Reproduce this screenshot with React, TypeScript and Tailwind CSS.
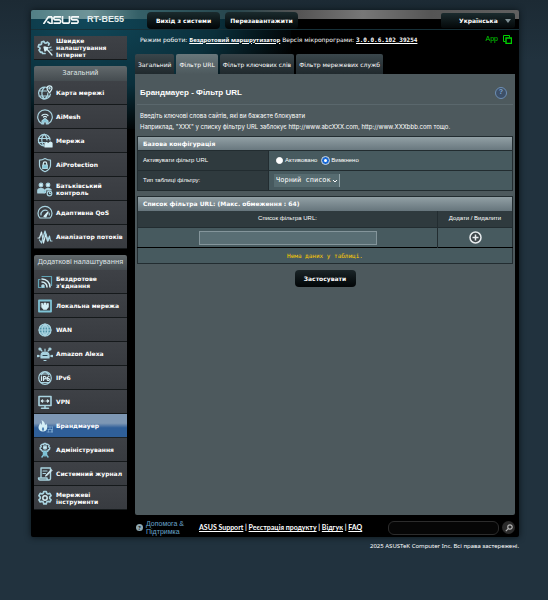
import React from 'react'

type MenuItem = { label: string; icon: React.ReactNode; active?: boolean }

const Icon = ({ children }: { children: React.ReactNode }) => (
  <svg viewBox="0 0 16 16" className="h-4 w-4 shrink-0" fill="none" stroke="#a9d3e0" strokeWidth="1.2" strokeLinecap="round" strokeLinejoin="round" aria-hidden="true">
    {children}
  </svg>
)

const gearPath = 'M6.8 1.5h2.4l.5 1.800 1.300.700 1.800-.600 1.300 2.200-1.400 1.300v1.600l1.400 1.300-1.300 2.200-1.800-.600-1.300.700-.500 1.800H6.800l-.500-1.800-1.300-.700-1.800.600-1.300-2.200 1.400-1.300V7.100L1.900 5.600l1.300-2.200 1.800.600 1.300-.700z'

const quickIcon = (
  <Icon>
    <path d="M8 13.5H5.5L5 12l-1.5.3L2 10l1-1.2-.3-1.3L1.2 7 2 4.5l1.7.2.9-.9L4.5 2l2.4-.6.8 1.5 1.4.2 1.3-1 1.8 1.5-.7 1.5" strokeWidth="1.7" />
    <path d="M8 7l7 8M7 7l4 .5L8 11z" fill="#d4eef5" stroke="#d4eef5" />
    <path d="M12 8l2-1M13 10h2" />
  </Icon>
)

const generalItems: MenuItem[] = [
  {
    label: 'Карта мережі',
    icon: (
      <Icon>
        <path d="M10.5 2.8A6 6 0 1 0 13.5 9M2 6h7.5M2 11h11M7.5 2.5C4 5 4 11.500 7.500 14M7.500 14c2.500-1.500 3.500-4 3.300-6" />
        <path d="M12.500 7.800C11 5.800 10 4.800 10 3.300a2.500 2.500 0 0 1 5 0c0 1.500-1 2.500-2.500 4.500z" stroke="#d4eef5" />
        <circle cx="12.500" cy="3.300" r=".6" fill="#d4eef5" />
      </Icon>
    ),
  },
  {
    label: 'AiMesh',
    icon: (
      <Icon>
        <path d="M4.500 14.500a7.300 7.300 0 1 1 7 0" />
        <path d="M5 6.500a4.200 4.200 0 0 1 6 0M6.500 8a2.200 2.200 0 0 1 3 0" stroke="#d4eef5" />
        <path d="M5 15v-3l3-2.500 3 2.500v3H9.300v-2H6.700v2z" fill="#7fc3d6" />
      </Icon>
    ),
  },
  {
    label: 'Мережа',
    icon: (
      <Icon>
        <path d="M13 7A5.800 5.800 0 1 0 7 13M1.500 5.500h11M1.500 9.500H8M7 1.500C4 4 4 10 7 13M7.500 1.500C9.500 3.500 10 5 10 7" />
        <path d="M8 14v-3.500l1.500-1 1.500 1V14zM12 14v-4l1.500-1 1.500 1v4z" fill="#d4eef5" stroke="#d4eef5" />
      </Icon>
    ),
  },
  {
    label: 'AiProtection',
    icon: (
      <Icon>
        <path d="M8 1.500c2 1.300 3.500 1.700 5.500 1.700v5c0 3.300-2.500 5.300-5.500 6.500-3-1.200-5.500-3.200-5.500-6.500v-5C4.500 3.200 6 2.800 8 1.500z" />
        <path d="M6.300 8V6.500a1.700 1.700 0 0 1 3.400 0V8" stroke="#d4eef5" />
        <path d="M5.700 8h4.600v3.500H5.700z" fill="#7fc3d6" />
      </Icon>
    ),
  },
  {
    label: 'Батьківський контроль',
    icon: (
      <Icon>
        <circle cx="4" cy="4" r="1.800" fill="#d4eef5" />
        <circle cx="11" cy="4" r="1.800" fill="#d4eef5" />
        <path d="M.8 12V9.500C.8 8 2 7.500 4 7.500s3 .5 3 2V12zM8.500 9c0-1 1-1.500 2.500-1.500 2 0 3 .7 3.300 1.500z" fill="#a9d3e0" />
        <circle cx="7.500" cy="10.500" r="1.300" fill="#7fc3d6" />
        <circle cx="12.500" cy="12.500" r="2.300" />
        <path d="M12.500 11.500v1h1" />
      </Icon>
    ),
  },
  {
    label: 'Адаптивна QoS',
    icon: (
      <Icon>
        <path d="M3 13A7 6.800 0 1 1 13 13z" />
        <path d="M4 10a4.300 4.300 0 0 1 6-4.500M12 8a4.300 4.300 0 0 1 .3 2" />
        <path d="M7 11.500l4-4.500-2.200 5z" fill="#d4eef5" stroke="#d4eef5" />
      </Icon>
    ),
  },
  {
    label: 'Аналізатор потоків',
    icon: (
      <Icon>
        <path d="M1 9h1.500L4.500 3l2 11 2.300-9 1.700 7 1.500-3" stroke="#d4eef5" />
        <path d="M2.500 11l2 3L8 2l3 10 1.500-5 1 5M14.500 12h.5" />
      </Icon>
    ),
  },
]

const advancedItems: MenuItem[] = [
  {
    label: "Бездротове з'єднання",
    icon: (
      <Icon>
        <path d="M3 5.500H1.500v8h6M5 2.500h9.500v9" stroke="#5fa3b5" />
        <path d="M5 5a8 8 0 0 1 8 8M5 8a5 5 0 0 1 5 5" stroke="#d4eef5" strokeWidth="1.500" />
        <circle cx="6" cy="12" r="1.200" fill="#d4eef5" />
      </Icon>
    ),
  },
  {
    label: 'Локальна мережа',
    icon: (
      <Icon>
        <path d="M2 2.500h12v11H2z" stroke="#7fc3d6" strokeWidth="1.800" />
        <path d="M4.500 5.500h1.500v1.500h1V5h2v2h1V5.500h1.500V9L9.500 11.500h-3L4.500 9z" fill="#d4eef5" stroke="#d4eef5" strokeWidth=".6" />
      </Icon>
    ),
  },
  {
    label: 'WAN',
    icon: (
      <Icon>
        <circle cx="8" cy="8" r="6" fill="#4f91a6" />
        <path d="M2 8h12M3 5h10M3 11h10M8 2v12M8 2C4 5 4 11 8 14c4-3 4-9 0-12z" />
      </Icon>
    ),
  },
  {
    label: 'Amazon Alexa',
    icon: (
      <Icon>
        <path d="M4 9.500C4 5 12 5 12 9.500V12H4z" fill="#a9d3e0" />
        <path d="M6 9.500h4" stroke="#2c4550" />
        <path d="M5 5L3.500 3.500M11 5l1.500-1.500M3 10H1.500M13 10h1.500M8 5V3" />
        <circle cx="3" cy="3" r="1" fill="#7fc3d6" />
        <circle cx="13" cy="3" r="1" fill="#7fc3d6" />
        <circle cx="1" cy="10" r=".7" fill="#7fc3d6" />
        <circle cx="15" cy="10" r=".7" fill="#7fc3d6" />
        <path d="M7 14.500h2" />
      </Icon>
    ),
  },
  {
    label: 'IPv6',
    icon: (
      <Icon>
        <circle cx="8" cy="8" r="6.300" />
        <path d="M3.500 4h9M3.500 12.500h9M8 1.700C5 3 4.500 4.500 4.500 5M8 1.700c3 1.300 3.500 2.800 3.500 3.300" />
        <path d="M4.500 6.500v4M6.500 10.500v-4h1.300a1 1 0 0 1 0 2.300H6.500M12 6.500c-2.500 0-2.500 4-.8 4s1.700-2.500-.8-2" stroke="#d4eef5" />
      </Icon>
    ),
  },
  {
    label: 'VPN',
    icon: (
      <Icon>
        <path d="M2 2.500h12v9H2zM8 11.500V14M4.500 14.300h7" strokeWidth="1.600" />
        <path d="M4.500 7h2.500M9 7h2.500M5.500 5.800L4.300 7l1.200 1.200M10.500 5.800L11.700 7l-1.200 1.200" stroke="#d4eef5" />
      </Icon>
    ),
  },
  {
    label: 'Брандмауер',
    active: true,
    icon: (
      <Icon>
        <path d="M6 13.500c-3 0-4.500-2-4.500-4 0-2 1.500-3 1.500-4.500 1 .5 1.300 1 1.500 2C5.500 5.500 5 3.500 4.500 2 7.500 3.500 8 5.500 8 7c.8-.3 1-1 1-1.500 1.300 1.500 1.500 3 1.300 4-.3 2.500-1.800 4-4.300 4z" fill="#d4eef5" stroke="none" />
        <path d="M6 13c-1.500-1-1.500-2.500 0-4 1.500 1.500 1.500 3 0 4z" fill="#4f84b5" stroke="none" />
        <path d="M11 9h4.500M11 11.500h4.500M10 14h5.500M13 9v2.500M11.500 11.500V14M14.500 11.500V14M15.500 9v5" stroke="#86b4d6" strokeWidth=".6" />
      </Icon>
    ),
  },
  {
    label: 'Адміністрування',
    icon: (
      <Icon>
        <path d="M7 1.500h2l.4 1.200 1.300-.5 1.500 1.400-.6 1.200 1.200.7-.3 2-1.200.3-.5 1.400-5.600 0-.7-1.400-1.200-.3-.2-2 1.200-.7-.6-1.200 1.500-1.400 1.300.5z" strokeWidth="1.400" />
        <circle cx="8" cy="5.500" r="1.600" fill="#d4eef5" />
        <path d="M6.500 9.500V13l-1.500 2M9.500 9.500V13l1.500 2M8 10v4" stroke="#7fc3d6" strokeWidth="1.500" />
      </Icon>
    ),
  },
  {
    label: 'Системний журнал',
    icon: (
      <Icon>
        <path d="M4 11V2h9.500v10.500c0 1-.5 1.500-1.500 1.500H3c-1 0-1.500-.7-1.500-2h8.500c0 1.300.5 2 1.500 2" strokeWidth="1.400" />
        <path d="M6 5h4M6 7.500h2.500" />
        <path d="M15 4.500L9.500 10l-1 .3.300-1.200L14 3.800z" fill="#d4eef5" stroke="#d4eef5" strokeWidth=".8" />
      </Icon>
    ),
  },
  {
    label: 'Мережеві інструменти',
    icon: (
      <Icon>
        <path d={gearPath} strokeWidth="1.700" />
        <circle cx="8" cy="8" r="2.200" stroke="#d4eef5" strokeWidth="1.500" />
      </Icon>
    ),
  },
]

const tabs = ['Загальний', 'Фільтр URL', 'Фільтр ключових слів', 'Фільтр мережевих служб']

const MenuLink = ({ item }: { item: MenuItem }) => (
  <li>
    <a
      href="#"
      className={
        item.active
          ? 'flex h-6 items-center gap-[3px] border-b border-[#1c2226] bg-linear-to-b from-[#7d97b4] from-40% to-[#2f5f99] to-60% pl-[3px] text-[6px] leading-[7px] font-bold text-white'
          : 'flex h-6 items-center gap-[3px] border-b border-[#15191b] bg-linear-to-b from-[#3e4146] to-[#383b40] pl-[3px] text-[6px] leading-[7px] font-bold text-white'
      }
    >
      {item.icon}
      <span className="flex-1">{item.label}</span>
    </a>
  </li>
)

const MenuGroup = ({ title, items }: { title: string; items: MenuItem[] }) => (
  <section>
    <h2 className="flex h-[15px] items-center justify-center rounded-t-xs bg-linear-to-b from-[#62696c] to-[#454c50] text-[7px] whitespace-nowrap text-[#dfe4e6] font-['Noto_Sans',sans-serif]">{title}</h2>
    <ul>
      {items.map((item) => (
        <MenuLink key={item.label} item={item} />
      ))}
    </ul>
  </section>
)

const TopBar = () => (
  <header className="flex h-5 items-center border-b border-[#163038] pt-px pl-3">
    <svg viewBox="0 0 36 8" className="h-2 w-9" fill="none" stroke="#f4f8f8" strokeWidth="1.700" role="img" aria-label="ASUS">
      <path d="M.5 8L5.500.8H9M9 .8V8M4.300 5.500L8 8" />
      <path d="M18 .8h-6c-1.500 0-1.500 3 0 3h4.500c1.500 0 1.500 3.400 0 3.400H10.500" />
      <path d="M19.500 0v5.500c0 1.200.5 1.700 1.500 1.700h4c1 0 1.500-.5 1.500-1.700V0" />
      <path d="M36 .8h-6.500c-1.500 0-1.500 3 0 3H34c1.500 0 1.500 3.400 0 3.400h-6" />
    </svg>
    <span className="ml-2 w-[60px] text-[9px] font-bold whitespace-nowrap text-[#e6eeee] font-['Liberation_Sans',sans-serif]">RT-BE55</span>
    <div className="flex gap-[5px]">
      <button className="h-[17px] w-[73px] rounded-sm bg-linear-to-b from-[#1b2b2e] to-[#030607] text-[6px] font-bold">Вихід з системи</button>
      <button className="h-[17px] w-[73px] rounded-sm bg-linear-to-b from-[#1b2b2e] to-[#030607] text-[6px] font-bold">Перезавантажити</button>
    </div>
    <div className="relative mr-1 ml-auto">
      <select aria-label="Мова" className="block h-[15px] w-[74px] appearance-none rounded-xs bg-linear-to-b from-[#1b2b2e] to-[#05090a] pl-[18px] text-[6px] font-bold">
        <option>Українська</option>
      </select>
      <svg viewBox="0 0 6 4" className="pointer-events-none absolute top-[6px] right-1 h-1 w-[6px]" fill="#7f9095">
        <path d="M0 0h6L3 4z" />
      </svg>
    </div>
  </header>
)

const FilterPanel = () => (
  <main className="min-h-[441px] rounded-b-xs bg-[#4d595d] px-[2px] text-[6px] text-white font-['Liberation_Sans',sans-serif]">
    <div className="flex h-[31px] items-center justify-between border-b border-[#5a676c] pt-[7px] pr-[6px] pl-[3px]">
      <h1 className="text-[8px] font-bold">Брандмауер - Фільтр URL</h1>
      <button aria-label="Довідка" className="flex h-3 w-3 items-center justify-center rounded-full border border-[#6d8fb5] bg-[#3d5068] text-[7px] font-bold text-[#7fa4cc]">?</button>
    </div>
    <p className="mt-1 mb-1 h-[23px] pt-px pl-[3px] leading-[11px] whitespace-nowrap font-['Inter',sans-serif]">
      Введіть ключові слова сайтів, які ви бажаєте блокувати
      <br />
      Наприклад, "XXX" у списку фільтру URL заблокує http://www.abcXXX.com, http://www.XXXbbb.com тощо.
    </p>
    <table className="w-full border-collapse border border-[#222c30] bg-[#475a5f]">
      <thead>
        <tr className="h-[14px] bg-linear-to-b from-[#92a0a5] to-[#66757c] text-left">
          <th colSpan={2} className="p-0 pl-[5px] font-['DejaVu_Sans',sans-serif]">Базова конфігурація</th>
        </tr>
      </thead>
      <tbody>
        <tr className="h-5 border-t border-[#222c30]">
          <th className="w-[131px] border-r border-[#222c30] bg-[#2f3a3e] p-0 pl-[5px] text-left font-normal">Активувати фільтр URL</th>
          <td className="p-0 pl-[7px]">
            <div className="flex items-center gap-[2px]">
              <input id="on" type="radio" name="filter" className="h-[7px] w-[7px] appearance-none rounded-full border border-white bg-white checked:border-[#1668d8]" />
              <label htmlFor="on">Активовано</label>
              <input id="off" type="radio" name="filter" defaultChecked className="ml-[3px] h-[7px] w-[7px] appearance-none rounded-full border border-white bg-white checked:border-2 checked:border-[#1668d8] checked:outline-1 checked:outline-[#c9dcf5]" />
              <label htmlFor="off">Вимкнено</label>
            </div>
          </td>
        </tr>
        <tr className="h-5 border-t border-[#222c30]">
          <th className="border-r border-[#222c30] bg-[#2f3a3e] p-0 pl-[5px] text-left font-normal">
            <label htmlFor="type">Тип таблиці фільтру:</label>
          </th>
          <td className="p-0 pl-[5px]">
            <div className="relative w-[66px]">
              <select id="type" className="block h-[13px] w-full appearance-none border-r border-[#91a2a7] bg-[#566b70] pl-[2px] text-[7px] font-['DejaVu_Sans_Mono',monospace]">
                <option>Чорний список</option>
              </select>
              <svg viewBox="0 0 4 3" className="pointer-events-none absolute top-[6px] right-[3px] h-[3px] w-1" fill="none" stroke="#fff">
                <path d="M0 0l2 2 2-2" />
              </svg>
            </div>
          </td>
        </tr>
      </tbody>
    </table>
    <table className="mt-[5px] w-full border-collapse border border-[#222c30] bg-[#475a5f] text-center">
      <thead>
        <tr className="h-[14px] bg-linear-to-b from-[#92a0a5] to-[#66757c] text-left">
          <th colSpan={2} className="p-0 pl-[5px] font-['DejaVu_Sans',sans-serif]">Список фільтра URL: (Макс. обмеження : 64)</th>
        </tr>
        <tr className="h-[17px] border-b border-[#222c30] bg-[#2f3a3e]">
          <th className="p-0 font-normal">Список фільтра URL:</th>
          <th className="w-[75px] border-l border-[#222c30] p-0 font-normal">Додати / Видалити</th>
        </tr>
      </thead>
      <tbody>
        <tr className="h-5">
          <td className="p-0">
            <input type="text" aria-label="Список фільтра URL" className="mx-auto block h-[14px] w-[178px] border border-[#84959b] bg-[#596e74] px-1" />
          </td>
          <td className="border-l border-[#222c30] p-0">
            <button aria-label="Додати" className="mx-auto block h-[13px] w-[13px]">
              <svg viewBox="0 0 13 13" fill="#3e464a" stroke="#e8ecee" strokeWidth="1.500">
                <circle cx="6.500" cy="6.500" r="5.500" />
                <path d="M6.500 3.500v6M3.500 6.500h6" />
              </svg>
            </button>
          </td>
        </tr>
        <tr className="h-4 border-t border-black">
          <td colSpan={2} className="p-0 text-[#ffcc00] font-['DejaVu_Sans_Mono',monospace]">Нема даних у таблиці.</td>
        </tr>
      </tbody>
    </table>
    <button className="mx-auto mt-[6px] block h-[17px] w-[61px] rounded-sm bg-linear-to-b from-[#1b2528] to-[#030607] text-[6px] font-bold font-['DejaVu_Sans',sans-serif]">Застосувати</button>
  </main>
)

const Footer = () => (
  <footer className="flex h-[22px] items-center pt-[3px] pl-px text-[7px] font-['Lato',sans-serif]">
    <span className="flex h-[7px] w-[7px] items-center justify-center rounded-full bg-[#8fa9b3] text-[6px] font-bold text-black">?</span>
    <a href="#" className="ml-[3px] w-[53px] leading-2 text-[#6aa5cd] font-['Liberation_Sans',sans-serif]">Допомога & Підтримка</a>
    <nav className="font-bold whitespace-nowrap">
      <a href="#" className="underline">ASUS Support</a> | <a href="#" className="underline">Реєстрація продукту</a> | <a href="#" className="underline">Відгук</a> | <a href="#" className="underline">FAQ</a>
    </nav>
    <input type="text" aria-label="Пошук" className="ml-auto h-[14px] w-[111px] rounded-md border border-[#2c2c2c] bg-[#060606] px-1" />
    <button aria-label="Шукати" className="ml-[3px] flex h-[13px] w-[13px] items-center justify-center rounded-full bg-[#2b2b2b]">
      <svg viewBox="0 0 8 8" className="h-2 w-2" fill="none" stroke="#b5b5b5" strokeWidth="1.200">
        <circle cx="5" cy="3" r="2.200" />
        <path d="M3.400 4.600L.8 7.200" />
      </svg>
    </button>
  </footer>
)

const App = () => {
  return (
    <div className="min-h-screen bg-[#21323e] bg-linear-to-b from-[#1c2a34] to-[#21323e] to-10% pt-[10px] pr-[29px] pl-[31px] text-[7px] text-white font-['DejaVu_Sans',sans-serif]">
      <div className="rounded-xs bg-black bg-[linear-gradient(to_right,#527f86,#6f9498_12%,#356068_22%,#27454c_42%,#555454_55%,#777_68%,#555_82%,#606060),radial-gradient(ellipse_at_32%_0%,#11485a,#0a2f3b_45%,transparent_75%)] bg-[size:100%_9px,300px_110px] bg-[position:0_0,-40px_9px] bg-no-repeat shadow-[0_0_6px_#0b1318]">
        <TopBar />
        <div className="flex gap-2 pr-1 pl-[3px]">
          <aside className="flex w-[93px] shrink-0 flex-col gap-[6px] pt-[6px]">
            <ul>
              <MenuLink item={{ label: 'Швидке налаштування Інтернет', icon: quickIcon }} />
            </ul>
            <MenuGroup title="Загальний" items={generalItems} />
            <MenuGroup title="Додаткові налаштування" items={advancedItems} />
          </aside>
          <div className="flex min-w-0 flex-1 flex-col">
            <div className="flex h-6 items-center pr-[3px] pb-[5px] pl-[5px] text-[6px] whitespace-nowrap">
              <span>
                Режим роботи: <a href="#" className="font-bold underline font-['Noto_Sans',sans-serif]">Бездротовий маршрутизатор</a> Версія мікропрограми: <a href="#" className="font-bold underline font-['DejaVu_Sans_Mono',monospace]">3.0.0.6.102_39254</a>
              </span>
              <span className="ml-auto text-[7px] text-[#00d000] font-['Liberation_Sans',sans-serif]">App</span>
              <svg viewBox="0 0 9 9" className="ml-[5px] h-[9px] w-[9px]" fill="none" stroke="#00d000">
                <path d="M2.500 6.500h-2v-6h6v2" />
                <path d="M3 3h5.500v5.500H3z" strokeWidth="1.400" />
              </svg>
            </div>
            <nav className="flex h-5 gap-[2px] text-[6px]">
              {tabs.map((tab, i) => (
                <a
                  key={tab}
                  href="#"
                  className={
                    i === 1
                      ? 'flex items-center rounded-t-xs bg-linear-to-b from-[#69777b] to-[#4d595d] px-[3px] whitespace-nowrap'
                      : 'flex items-center rounded-t-xs bg-linear-to-b from-[#3a464b] to-[#20292d] px-[3px] whitespace-nowrap'
                  }
                >
                  {tab}
                </a>
              ))}
            </nav>
            <FilterPanel />
            <Footer />
          </div>
        </div>
      </div>
      <p className="pt-[5px] text-right text-[6px] leading-2 font-['Noto_Sans',sans-serif]">2025 ASUSTeK Computer Inc. Всі права застережені.</p>
    </div>
  )
}

export default App
